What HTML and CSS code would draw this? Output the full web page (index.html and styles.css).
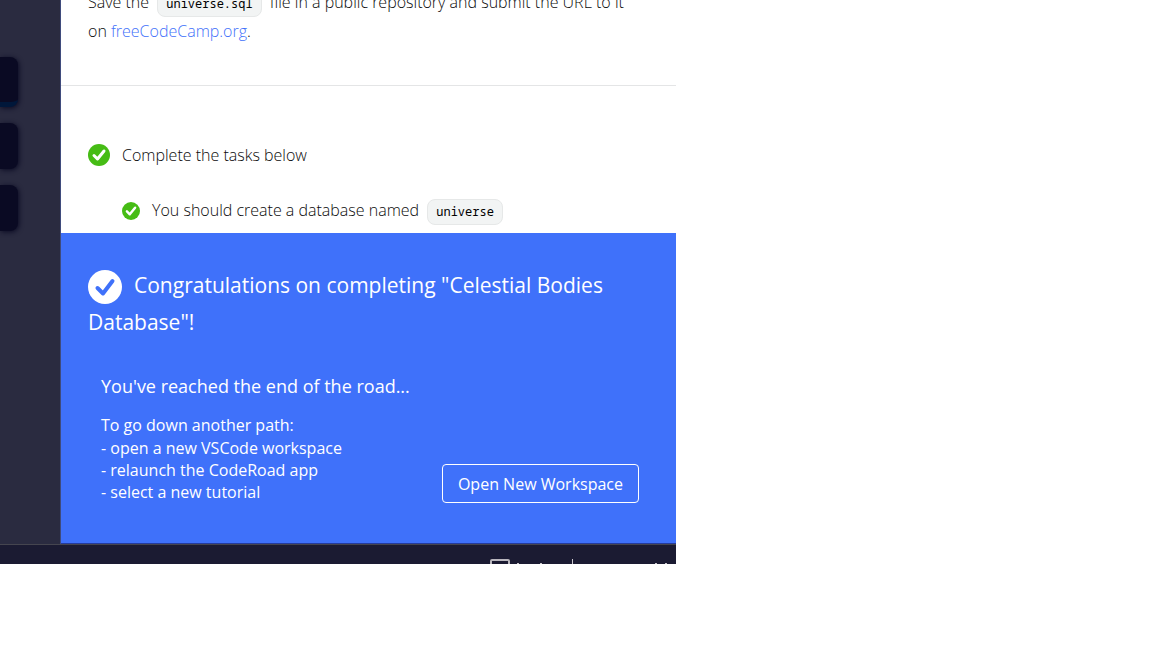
FILE: index.html
```html
<!DOCTYPE html>
<html lang="en">
<head>
<meta charset="utf-8">
<title>CodeRoad</title>
<link rel="stylesheet" href="styles.css">
</head>
<body>
<div class="app">
  <div class="workbench">
    <aside class="sidebar" aria-label="Panels">
      <div class="tile tile-active"></div>
      <div class="tile"></div>
      <div class="tile"></div>
    </aside>
    <main class="tutorial">
      <section class="lesson">
        <p class="instructions">Save the <code class="code">universe.sql</code> file in a public repository and submit the URL to it<br>on <a class="link" href="#">freeCodeCamp.org</a>.</p>
      </section>
      <section class="tasks">
        <div class="task">
          <svg class="check" viewBox="0 0 22 22" aria-hidden="true"><circle cx="11" cy="11" r="11"/><path d="M6 11.5l3.5 3.5L16 7"/></svg>
          <span>Complete the tasks below</span>
        </div>
        <div class="task subtask">
          <svg class="check check-small" viewBox="0 0 22 22" aria-hidden="true"><circle cx="11" cy="11" r="11"/><path d="M6 11.5l3.5 3.5L16 7"/></svg>
          <span>You should create a database named <code class="code">universe</code></span>
        </div>
      </section>
      <section class="complete">
        <h1 class="title"><svg class="check check-large" viewBox="0 0 34 34" aria-hidden="true"><circle cx="17" cy="17" r="17"/><path d="M9.500 18l5.500 5.500L24.500 11"/></svg>Congratulations on completing "Celestial Bodies Database"!</h1>
        <div class="complete-body">
          <div>
            <h2 class="subtitle">You've reached the end of the road...</h2>
            <p class="lead">To go down another path:</p>
            <p class="steps">- open a new VSCode workspace<br>- relaunch the CodeRoad app<br>- select a new tutorial</p>
          </div>
          <button class="open" type="button">Open New Workspace</button>
        </div>
      </section>
    </main>
  </div>
  <footer class="status">
    <svg class="status-marks" viewBox="0 0 186 6" aria-hidden="true">
      <path d="M1 6V3Q1 2 2 2H18Q19 2 19 3V6" fill="none" stroke="#b9b6bd" stroke-width="2"/>
      <path d="M27 5h2v1h-2zM50 5h2v1h-2zM82 1h1v5h-1zM165 5h2v1h-2zM175 5h2v1h-2z" fill="#c9c6cc"/>
    </svg>
  </footer>
</div>
</body>
</html>
```
FILE: styles.css
```css
* { box-sizing: border-box; }

body {
  margin: 0;
  padding-right: 476px;
  background: #fff;
  color: #0a0a0a;
  font-family: "Open Sans", "Noto Sans", sans-serif;
  font-size: 16px;
  line-height: 28px;
}

h1, h2, p { margin: 0; font-weight: 400; }

.app { overflow: hidden; }
.workbench { display: flex; border-bottom: 1px solid #45454f; }

.sidebar {
  flex: 0 0 61px;
  display: flex;
  flex-direction: column;
  gap: 16px;
  padding: 57px 42px 0 0;
  background: #2a2b40;
  border-right: 1px solid #3f4b7c;
}
.tile {
  height: 46px;
  border-radius: 0 8px 8px 0;
  background: #0a0a23;
  box-shadow: 1px 1px 5px #0a0a23;
}
.tile-active { height: 50px; border-bottom: 5px solid #00173a; }

.tutorial { flex: 1; min-width: 0; }
.lesson { padding: 0 27px 39px; border-bottom: 1px solid #e4e5e6; }
.instructions { margin-top: -12px; font-weight: 300; line-height: 29px; white-space: nowrap; }
.link { color: #3f71fa; text-decoration: none; }

.code {
  display: inline-block;
  margin: 0 4px;
  padding: 0 8px;
  border: 1px solid #e6e8e8;
  border-radius: 8px;
  background: #f2f4f4;
  color: #000;
  font-family: "Noto Sans Mono", "DejaVu Sans Mono", monospace;
  font-size: 12px;
  font-weight: 400;
  line-height: 24px;
}

.tasks { padding: 55px 27px 8px; }
.task { display: flex; align-items: center; gap: 12px; font-weight: 300; }
.subtask { margin-top: 27px; padding-left: 34px; }

.check { flex: none; width: 22px; height: 22px; fill: #46bc15; }
.check path { fill: none; stroke: #fff; stroke-width: 3; stroke-linecap: round; stroke-linejoin: round; }
.check-small { width: 18px; height: 18px; }
.check-large { width: 34px; height: 34px; margin-right: 12px; fill: #fff; vertical-align: -11px; }
.check-large path { stroke: #3f71fa; stroke-width: 4; }

.complete { padding: 34px 27px 40px; background: #3f71fa; border-bottom: 1px solid #253b9a; color: #fff; }
.title { font-size: 21px; line-height: 36px; }
.complete-body {
  display: flex;
  align-items: flex-end;
  justify-content: space-between;
  padding: 31px 10px 0 13px;
}
.subtitle { font-size: 18px; line-height: 30px; }
.lead { margin-top: 12px; line-height: 24px; }
.steps { line-height: 22px; }
.open {
  height: 39px;
  padding: 0 15px;
  border: 1px solid #fff;
  border-radius: 4px;
  background: transparent;
  color: #fff;
  font: inherit;
}

.status { display: flex; justify-content: flex-end; align-items: flex-end; height: 19px; background: #1b1b32; }
.status-marks { width: 186px; height: 6px; }
```
